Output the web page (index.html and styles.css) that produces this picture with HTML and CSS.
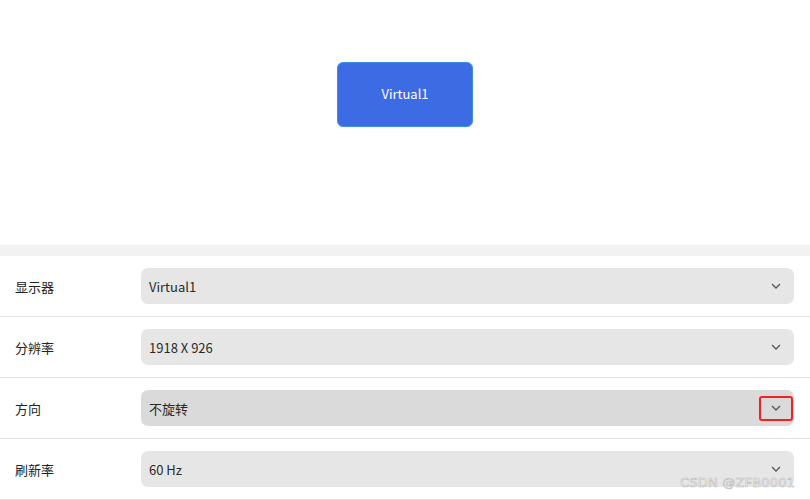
FILE: index.html
```html
<!DOCTYPE html>
<html lang="zh">
<head>
<meta charset="utf-8">
<link rel="stylesheet" href="styles.css">
</head>
<body>
<div class="page">
  <section class="preview">
    <div class="monitor">Virtual1</div>
  </section>
  <div class="band"></div>
  <section class="panel">
    <div class="row">
      <div class="label">显示器</div>
      <div class="combo"><span>Virtual1</span><span class="arrow"><svg width="10" height="6" viewBox="0 0 10 6"><path d="M1 1 L5 5 L9 1" fill="none" stroke="#555" stroke-width="1.3"/></svg></span></div>
    </div>
    <div class="row">
      <div class="label">分辨率</div>
      <div class="combo"><span>1918 X 926</span><span class="arrow"><svg width="10" height="6" viewBox="0 0 10 6"><path d="M1 1 L5 5 L9 1" fill="none" stroke="#555" stroke-width="1.3"/></svg></span></div>
    </div>
    <div class="row">
      <div class="label">方向</div>
      <div class="combo hover"><span>不旋转</span><span class="arrow marked"><svg width="10" height="6" viewBox="0 0 10 6"><path d="M1 1 L5 5 L9 1" fill="none" stroke="#555" stroke-width="1.3"/></svg></span></div>
    </div>
    <div class="row">
      <div class="label">刷新率</div>
      <div class="combo"><span>60 Hz</span><span class="arrow"><svg width="10" height="6" viewBox="0 0 10 6"><path d="M1 1 L5 5 L9 1" fill="none" stroke="#555" stroke-width="1.3"/></svg></span></div>
    </div>
  </section>
  <div class="watermark">CSDN @ZFB0001</div>
</div>
</body>
</html>
```
FILE: styles.css
```css
html, body {
  margin: 0;
  padding: 0;
  background: #ffffff;
}
body {
  font-family: "Noto Sans CJK SC", "Noto Sans", sans-serif;
  color: #1f1f1f;
  width: 810px;
  height: 500px;
  overflow: hidden;
}
.page {
  position: relative;
  display: flex;
  flex-direction: column;
  height: 500px;
}
.preview {
  flex-shrink: 0;
  height: 245px;
  display: flex;
  justify-content: center;
  align-items: flex-start;
  padding-top: 62px;
  box-sizing: border-box;
}
.monitor {
  width: 136px;
  height: 65px;
  box-sizing: border-box;
  background: #3c6be4;
  border: 1px solid #3d8fe6;
  border-radius: 6px;
  color: #ffffff;
  font-size: 13px;
  display: flex;
  align-items: center;
  justify-content: center;
  padding-bottom: 2px;
}
.band {
  flex-shrink: 0;
  height: 11px;
  background: #f2f2f2;
}
.panel {
  flex-shrink: 0;
  background: #ffffff;
  border-radius: 6px 6px 0 0;
  display: flex;
  flex-direction: column;
}
.row {
  flex-shrink: 0;
  height: 60px;
  border-bottom: 1px solid #e3e3e3;
  display: flex;
  align-items: center;
  padding-left: 15px;
}
.label {
  width: 126px;
  font-size: 13px;
  color: #222;
}
.combo {
  width: 653px;
  height: 36px;
  background: #e6e6e6;
  border-radius: 7px;
  display: flex;
  align-items: center;
  justify-content: space-between;
  padding-left: 8px;
  box-sizing: border-box;
  font-size: 13px;
  color: #2a2a2a;
}
.combo.hover {
  background: #dadada;
}
.arrow {
  width: 34px;
  height: 25px;
  margin-right: 1px;
  display: flex;
  align-items: center;
  justify-content: center;
  box-sizing: border-box;
}
.arrow.marked {
  border: 2px solid #f22222;
  border-radius: 3px;
}
.watermark {
  position: absolute;
  left: 680px;
  top: 475px;
  font-family: "DejaVu Sans", sans-serif;
  font-size: 13px;
  color: #ffffff;
  -webkit-text-stroke: 0.6px #b8b8b8;
  letter-spacing: 0.2px;
}
```
